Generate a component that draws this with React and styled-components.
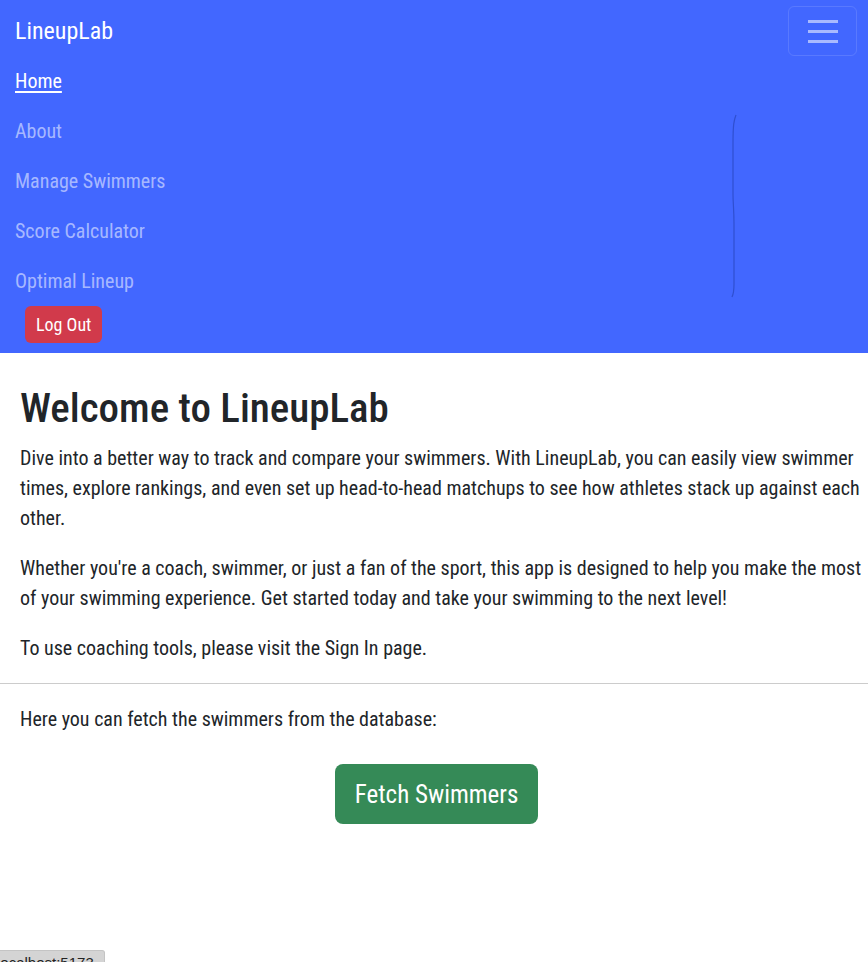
import styled, { createGlobalStyle } from "styled-components";

const Global = createGlobalStyle`
  html, body {
    margin: 0;
    padding: 0;
    background: #fff;
  }
  body {
    font-family: "Roboto Condensed", "Liberation Sans Narrow", Roboto, sans-serif;
    color: #212529;
    font-size: 20px;
  }
`;

export default function App() {
  return (
    <>
      <Global />
      <Navbar>
        <TopRow>
          <Brand href="#">LineupLab</Brand>
          <Toggler aria-label="menu">
            <span />
            <span />
            <span />
          </Toggler>
        </TopRow>
        <NavList>
          <NavItem active>Home</NavItem>
          <NavItem>About</NavItem>
          <NavItem>Manage Swimmers</NavItem>
          <NavItem>Score Calculator</NavItem>
          <NavItem>Optimal Lineup</NavItem>
        </NavList>
        <LogOut>Log Out</LogOut>
        <Curve width="8" height="184" viewBox="0 0 8 184">
          <path d="M5 1 C3 6 2 10 2 30 L2 80 C2 90 3 95 3 110 L3 170 C3 178 2 181 1 183" />
        </Curve>
      </Navbar>

      <Main>
        <Title>Welcome to LineupLab</Title>
        <Text>
          Dive into a better way to track and compare your swimmers. With
          LineupLab, you can easily view swimmer times, explore rankings, and
          even set up head-to-head matchups to see how athletes stack up against
          each other.
        </Text>
        <Text>
          Whether you're a coach, swimmer, or just a fan of the sport, this app
          is designed to help you make the most of your swimming experience. Get
          started today and take your swimming to the next level!
        </Text>
        <Text>To use coaching tools, please visit the Sign In page.</Text>
      </Main>
      <Divider />
      <FetchSection>
        <Text>Here you can fetch the swimmers from the database:</Text>
        <FetchButton>Fetch Swimmers</FetchButton>
      </FetchSection>

      <Status>localhost:5173</Status>
    </>
  );
}

const Navbar = styled.nav`
  position: relative;
  background: #4267ff;
  padding: 6px 11px 10px 15px;
`;

const TopRow = styled.div`
  display: flex;
  align-items: center;
  justify-content: space-between;
`;

const Brand = styled.a`
  color: #fff;
  text-decoration: none;
  font-size: 24px;
  line-height: 48px;
`;

const Toggler = styled.button`
  width: 69px;
  height: 50px;
  border: 1px solid rgba(255, 255, 255, 0.12);
  border-radius: 6px;
  background: transparent;
  display: flex;
  flex-direction: column;
  align-items: center;
  justify-content: center;
  gap: 7px;
  padding: 0;

  span {
    display: block;
    width: 30px;
    height: 3px;
    background: rgba(255, 255, 255, 0.55);
  }
`;

const NavList = styled.ul`
  list-style: none;
  margin: 0;
  padding: 0;
  display: flex;
  flex-direction: column;
`;

const NavItem = styled.li`
  font-size: 20px;
  line-height: 50px;
  color: ${(p) => (p.active ? "#fff" : "rgba(255, 255, 255, 0.55)")};
  text-decoration: ${(p) => (p.active ? "underline" : "none")};
  text-underline-offset: 3px;
`;

const LogOut = styled.button`
  margin: 0 0 0 10px;
  background: #d13a4b;
  color: #fff;
  border: none;
  border-radius: 6px;
  font-family: inherit;
  font-size: 18px;
  height: 37px;
  padding: 0 11px;
`;

const Curve = styled.svg`
  position: absolute;
  left: 731px;
  top: 114px;
  fill: none;
  stroke: #2f4fd0;
  stroke-width: 1.2;
`;

const Main = styled.main`
  padding: 31px 0 0 20px;
`;

const Title = styled.h1`
  margin: 0 0 11px;
  font-size: 41px;
  font-weight: 500;
  line-height: 48px;
`;

const Text = styled.p`
  margin: 0 0 20px;
  line-height: 30px;
`;

const Divider = styled.hr`
  margin: 0;
  border: none;
  border-top: 1px solid #ccc;
`;

const FetchSection = styled.section`
  padding: 20px 15px 20px 20px;
  display: flex;
  flex-direction: column;
  align-items: center;

  p {
    align-self: stretch;
    margin-bottom: 30px;
  }
`;

const FetchButton = styled.button`
  background: #358a57;
  color: #fff;
  border: none;
  border-radius: 8px;
  font-family: inherit;
  font-size: 25px;
  height: 60px;
  padding: 0 20px;
`;

const Status = styled.div`
  position: fixed;
  left: 0;
  top: 950px;
  height: 20px;
  background: #d4d4d4;
  border: 1px solid #c4c4c4;
  border-left: none;
  border-radius: 0 3px 0 0;
  font-family: "Liberation Sans", Arial, sans-serif;
  font-size: 15px;
  line-height: 1;
  padding: 4px 10px 0 0;
  margin-left: -3px;
  color: #222;
`;
